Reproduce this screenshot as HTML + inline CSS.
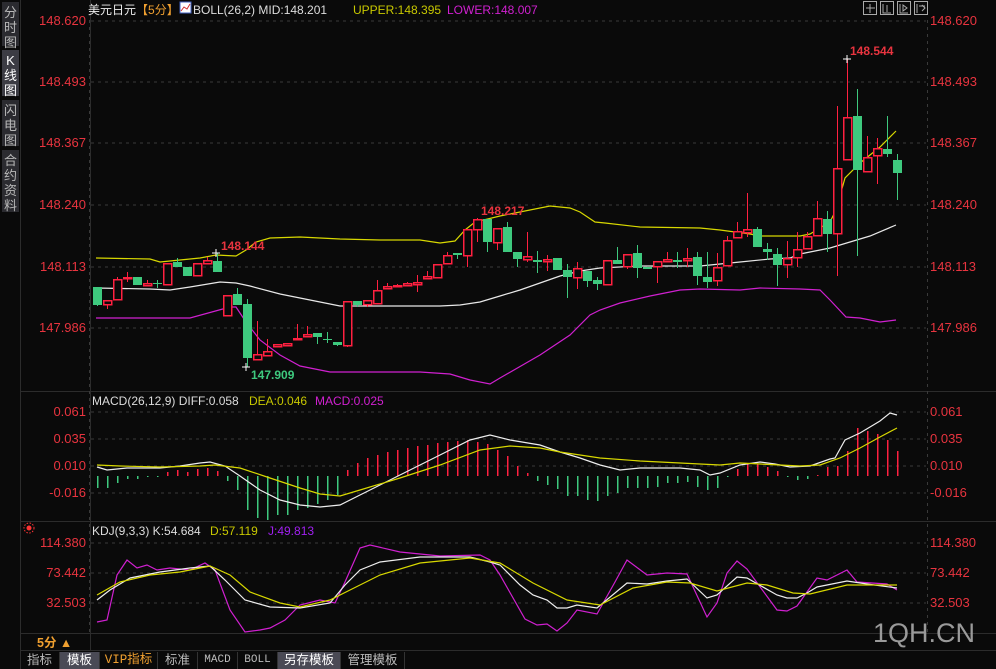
<!DOCTYPE html>
<html><head><meta charset="utf-8">
<style>
*{margin:0;padding:0;box-sizing:border-box}
body{width:996px;height:669px;background:#0a0a0a;overflow:hidden;position:relative;font-family:"Liberation Sans","Noto Sans CJK SC",sans-serif;font-size:12px;color:#ddd}
.t{position:absolute;white-space:nowrap;line-height:14px}
.side{position:absolute;left:2px;width:17px;background:#2b2b30;color:#b8b8b8;font-size:13px;line-height:15px;text-align:center;padding-top:3px}
.lab{position:absolute;color:#e8343f;font-size:13px;line-height:14px}
.l{right:910px;text-align:right}
.r{left:930px}
.tab{position:absolute;top:652px;height:17px;line-height:17px;text-align:center;color:#bbb;font-size:12.5px;border-right:1px solid #333}
</style></head><body>
<div class="side" style="top:2px;height:44px">分<br>时<br>图</div>
<div class="side" style="top:50px;height:46px;background:#3c3c44;color:#fff">K<br>线<br>图</div>
<div class="side" style="top:100px;height:46px">闪<br>电<br>图</div>
<div class="side" style="top:150px;height:62px">合<br>约<br>资<br>料</div>

<svg width="996" height="669" style="position:absolute;left:0;top:0" id="s">
<g stroke="#2c2c2c"><line x1="20.5" y1="0" x2="20.5" y2="669"/><line x1="90.5" y1="0" x2="90.5" y2="651"/>
<line x1="20" y1="391.5" x2="996" y2="391.5"/><line x1="20" y1="521.5" x2="996" y2="521.5"/><line x1="20" y1="633.5" x2="996" y2="633.5"/><line x1="20" y1="650.5" x2="996" y2="650.5"/></g>
<g stroke="#3a3a3a" stroke-dasharray="3,4">
<line x1="91" y1="21" x2="926" y2="21"/><line x1="91" y1="82" x2="926" y2="82"/><line x1="91" y1="143" x2="926" y2="143"/><line x1="91" y1="205" x2="926" y2="205"/><line x1="91" y1="267" x2="926" y2="267"/><line x1="91" y1="328" x2="926" y2="328"/>
<line x1="91" y1="412" x2="926" y2="412"/><line x1="91" y1="439" x2="926" y2="439"/><line x1="91" y1="466" x2="926" y2="466"/><line x1="91" y1="493" x2="926" y2="493"/>
<line x1="91" y1="543" x2="926" y2="543"/><line x1="91" y1="573" x2="926" y2="573"/><line x1="91" y1="603" x2="926" y2="603"/>
<line x1="927.5" y1="20" x2="927.5" y2="633"/><line x1="89.5" y1="20" x2="89.5" y2="633"/>
</g>
<g id="g"></g>
<g stroke="#aaa" fill="none"><rect x="863.5" y="1.5" width="13" height="13"/><rect x="880.5" y="1.5" width="13" height="13"/><rect x="897.5" y="1.5" width="13" height="13"/><rect x="914.5" y="1.5" width="13" height="13"/>
<path d="M870 4v9M866 8h9M883 4v9h8M887 5v7M900 4v9h8M903 5l4 3-4 3zM917 4v9M919 6h6M922 5l3 3-3 3"/></g>
<rect x="180" y="2" width="11" height="11" fill="#fff" stroke="#4060c0"/><path d="M181 11l3-4 3 2 3-5" stroke="#d03030" fill="none"/>
<circle cx="29" cy="528" r="2.5" fill="#f33"/><circle cx="29" cy="528" r="5" fill="none" stroke="#f33" stroke-dasharray="1.5,1.5"/>
</svg>

<div class="t" style="left:88px;top:3px;color:#eee">美元日元<span style="color:#f0a030">【5分】</span></div>
<div class="t" style="left:193px;top:3px;color:#ddd">BOLL(26,2) MID:148.201</div>
<div class="t" style="left:353px;top:3px;color:#c8c800">UPPER:148.395</div>
<div class="t" style="left:447px;top:3px;color:#d020d0">LOWER:148.007</div>
<div class="t" style="left:92px;top:394px;color:#ddd">MACD(26,12,9) DIFF:0.058</div>
<div class="t" style="left:249px;top:394px;color:#c8c800">DEA:0.046</div>
<div class="t" style="left:315px;top:394px;color:#d020d0">MACD:0.025</div>
<div class="t" style="left:92px;top:524px;color:#ddd">KDJ(9,3,3) K:54.684</div>
<div class="t" style="left:210px;top:524px;color:#c8c800">D:57.119</div>
<div class="t" style="left:268px;top:524px;color:#a020f0">J:49.813</div>

<div class="t" style="left:850px;top:44px;color:#e8343f;font-weight:bold">148.544</div>
<div class="t" style="left:221px;top:239px;color:#e8343f;font-weight:bold">148.144</div>
<div class="t" style="left:481px;top:204px;color:#e8343f;font-weight:bold">148.217</div>
<div class="t" style="left:251px;top:368px;color:#3ec97e;font-weight:bold">147.909</div>

<div class="lab l" style="top:14px">148.620</div><div class="lab r" style="top:14px">148.620</div>
<div class="lab l" style="top:75px">148.493</div><div class="lab r" style="top:75px">148.493</div>
<div class="lab l" style="top:136px">148.367</div><div class="lab r" style="top:136px">148.367</div>
<div class="lab l" style="top:198px">148.240</div><div class="lab r" style="top:198px">148.240</div>
<div class="lab l" style="top:260px">148.113</div><div class="lab r" style="top:260px">148.113</div>
<div class="lab l" style="top:321px">147.986</div><div class="lab r" style="top:321px">147.986</div>
<div class="lab l" style="top:405px">0.061</div><div class="lab r" style="top:405px">0.061</div>
<div class="lab l" style="top:432px">0.035</div><div class="lab r" style="top:432px">0.035</div>
<div class="lab l" style="top:459px">0.010</div><div class="lab r" style="top:459px">0.010</div>
<div class="lab l" style="top:486px">-0.016</div><div class="lab r" style="top:486px">-0.016</div>
<div class="lab l" style="top:536px">114.380</div><div class="lab r" style="top:536px">114.380</div>
<div class="lab l" style="top:566px">73.442</div><div class="lab r" style="top:566px">73.442</div>
<div class="lab l" style="top:596px">32.503</div><div class="lab r" style="top:596px">32.503</div>

<div class="t" style="left:873px;top:618px;color:#9a9a9a;font-size:27px;line-height:30px">1QH.CN</div>
<div class="t" style="left:37px;top:636px;color:#f0a030;font-weight:bold;font-size:12.5px">5分 ▲</div>

<div class="tab" style="left:20px;width:40px">指标</div>
<div class="tab" style="left:60px;width:40px;background:#4a4a55;color:#fff">模板</div>
<div class="tab" style="left:100px;width:58px;color:#f0a030;font-family:'Liberation Mono','Noto Sans CJK SC',monospace">VIP指标</div>
<div class="tab" style="left:158px;width:40px">标准</div>
<div class="tab" style="left:198px;width:40px;font-family:'Liberation Mono',monospace;font-size:11px">MACD</div>
<div class="tab" style="left:238px;width:40px;font-family:'Liberation Mono',monospace;font-size:11px">BOLL</div>
<div class="tab" style="left:278px;width:63px;background:#4a4a55;color:#fff">另存模板</div>
<div class="tab" style="left:341px;width:64px">管理模板</div>

<script>
var NS="http://www.w3.org/2000/svg",g=document.getElementById("g");
function el(n,a){var e=document.createElementNS(NS,n);for(var k in a)e.setAttribute(k,a[k]);g.appendChild(e);return e}
function pl(p,c){el("polyline",{points:p.map(function(q){return q.join(",")}).join(" "),fill:"none",stroke:c,"stroke-width":1.2})}
var R="#ff2040",G="#3ec97e";
var C=[[287,305,287,306,'g'],[300,304,300,309,'r'],[279,299,277,299,'r'],[277,278,272,282,'r'],[277,285,277,285,'g'],[283,285,280,285,'r'],[283,284,280,288,'g'],[263,284,263,284,'r'],[262,267,258,267,'g'],[267,276,267,276,'g'],[263,275,263,275,'r'],[260,263,257,263,'r'],[261,272,253,272,'g'],
[295,315,295,315,'r'],[294,305,288,305,'g'],[304,358,299,367,'g'],[354,359,321,359,'r'],[351,355,339,355,'r'],[344,346,344,346,'r'],[343,345,343,345,'r'],[338,339,324,339,'r'],[334,336,326,336,'r'],[333,337,333,344,'g'],[339,340,332,343,'g'],[342,345,342,346,'g'],[301,345,301,347,'r'],[301,305,301,307,'g'],[300,304,300,307,'r'],[290,303,280,303,'r'],[286,288,283,288,'r'],[285,286,284,286,'r'],[283,285,282,285,'r'],[282,284,275,292,'r'],[276,278,271,278,'r'],[264,277,264,277,'r'],[255,263,252,263,'r'],[253,255,253,259,'g'],[229,255,229,267,'r'],[219,229,218,242,'r'],[219,242,219,252,'g'],[228,242,228,250,'r'],
[227,252,222,252,'g'],[252,259,252,267,'g'],[256,259,232,262,'r'],[260,262,251,273,'g'],[259,261,255,271,'r'],[258,270,258,270,'g'],[270,277,264,298,'g'],[268,277,262,289,'r'],[271,281,277,287,'g'],[280,284,277,290,'g'],[260,284,260,284,'r'],[260,264,247,264,'g'],[254,266,254,269,'r'],[253,268,245,278,'g'],[267,269,267,269,'g'],[261,266,261,283,'r'],[259,261,252,261,'r'],[260,262,252,268,'g'],[258,260,248,267,'r'],[257,276,252,285,'g'],[277,282,252,288,'g'],[267,280,253,286,'r'],[240,265,236,265,'r'],[231,237,222,237,'r'],[229,232,193,237,'r'],[229,247,227,247,'g'],[249,252,243,260,'g'],[254,265,248,286,'g'],[258,264,241,278,'r'],[249,257,232,267,'r'],[236,248,232,248,'r'],[218,235,201,235,'r'],[219,234,211,252,'g'],[168,233,106,276,'r'],[117,159,59,159,'r'],[116,170,89,256,'g'],[157,171,136,171,'r'],[148,155,138,184,'r'],[149,154,116,157,'g'],[160,173,154,200,'g']];
pl([[96,258],[150,259],[160,262],[180,260],[200,258],[216,255],[236,256],[246,250],[256,242],[270,238],[300,237],[340,239],[380,240],[420,240],[440,243],[455,241],[465,230],[475,222],[500,216],[550,206],[570,208],[580,212],[595,222],[605,223],[640,227],[700,228],[720,230],[750,234],[760,236],[800,236],[810,234],[820,228],[830,222],[836,210],[845,178],[860,163],[880,147],[896,131]],"#d8d800");
pl([[96,288],[150,289],[170,290],[190,287],[220,282],[236,283],[250,286],[280,294],[330,304],[340,306],[380,306],[440,306],[460,305],[480,302],[500,296],[520,290],[540,283],[560,276],[580,271],[600,268],[640,266],[700,266],[740,262],[770,259],[790,258],[800,254],[820,250],[830,248],[850,242],[870,236],[896,225]],"#e8e8e8");
pl([[96,318],[150,318],[190,318],[230,307],[236,307],[246,322],[260,340],[280,355],[300,366],[330,372],[380,372],[420,372],[450,374],[470,380],[490,384],[500,378],[540,355],[570,335],[590,315],[600,310],[620,303],[650,296],[680,290],[700,289],[740,290],[760,288],[800,289],[820,290],[830,300],[846,317],[860,318],[880,322],[896,320]],"#d020d0");
C.forEach(function(c,i){var x=97+10*i+.5,col=c[4]=='r'?R:G;
el("line",{x1:x,x2:x,y1:c[2],y2:c[3],stroke:col,"shape-rendering":"crispEdges"});
var h=Math.max(1,c[1]-c[0]);
if(c[4]=='r')el("rect",{x:x-4,y:c[0]+.5,width:8,height:h,fill:"#0a0a0a",stroke:col,"stroke-width":1.5,"shape-rendering":"crispEdges"});
else el("rect",{x:x-4.5,y:c[0],width:9,height:h,fill:col,"shape-rendering":"crispEdges"});});
[[847,59],[216,253],[246,367]].forEach(function(p){el("path",{d:"M"+(p[0]-4)+" "+p[1]+"h8M"+p[0]+" "+(p[1]-4)+"v8",stroke:"#fff","shape-rendering":"crispEdges"})});
var M=[488,488,483,479,479,477,477,472,470,472,469,468,471,481,490,510,518,520,515,515,510,508,504,500,495,470,463,458,455,452,450,448,446,445,443,442,441,440,442,444,450,456,466,473,481,485,489,496,496,500,501,496,493,488,488,488,487,483,483,482,487,490,488,477,469,464,464,467,471,477,480,479,475,467,466,451,428,431,434,440,451];
M.forEach(function(v,i){var x=97+10*i+.5;el("line",{x1:x,x2:x,y1:476,y2:v,stroke:v<476?R:G,"stroke-width":1.5,"shape-rendering":"crispEdges"})});
pl([[97,467],[107,470],[117,469],[127,468],[160,468],[180,466],[200,463],[210,462],[225,466],[240,476],[260,490],[280,500],[300,505],[320,507],[340,505],[360,495],[380,485],[400,475],[440,455],[470,440],[490,435],[510,440],[540,445],[560,452],[580,458],[600,465],[620,470],[640,468],[680,468],[700,470],[710,475],[720,473],[740,465],[760,462],[775,464],[790,467],[810,466],[830,459],[835,458],[845,440],[860,433],[880,421],[890,413],[897,415]],"#eee");
pl([[97,465],[120,466],[160,467],[200,466],[215,465],[240,468],[270,478],[300,488],[320,494],[340,496],[360,490],[400,478],[440,465],[480,450],[510,446],[540,448],[560,452],[600,458],[640,461],[680,463],[720,465],[740,463],[800,466],[820,465],[840,458],[860,448],[880,437],[897,428]],"#d8d800");
pl([[97,622],[107,620],[117,575],[127,560],[137,568],[147,565],[157,570],[170,568],[190,570],[205,563],[215,570],[230,610],[245,632],[260,630],[270,628],[285,620],[300,605],[320,600],[335,603],[345,582],[360,548],[370,545],[400,552],[440,556],[480,555],[490,560],[500,575],[525,619],[537,625],[547,624],[557,631],[567,623],[577,610],[597,614],[615,582],[627,560],[647,575],[667,573],[687,574],[707,617],[717,603],[727,573],[737,561],[747,569],[777,610],[787,611],[797,606],[817,578],[827,580],[847,570],[857,582],[887,584],[897,590]],"#d020d0");
pl([[97,600],[110,590],[130,578],[160,572],[190,568],[210,566],[225,580],[245,600],[270,607],[300,608],[330,603],[345,585],[360,570],[380,562],[420,557],[470,557],[490,562],[500,565],[520,585],[533,595],[547,600],[557,608],[567,608],[577,605],[597,608],[627,583],[647,584],[667,581],[687,579],[707,598],[717,595],[737,577],[747,578],[777,595],[787,598],[797,598],[807,593],[817,587],[847,581],[867,584],[897,588]],"#eee");
pl([[97,595],[120,582],[150,575],[180,572],[210,566],[230,575],[250,592],[280,603],[300,607],[330,600],[350,590],[380,575],[420,563],[470,558],[500,563],[533,583],[567,600],[600,605],[633,588],[667,582],[690,583],[717,591],[747,583],[767,585],[793,593],[810,594],[847,585],[897,585]],"#d8d800");
</script>
</body></html>
